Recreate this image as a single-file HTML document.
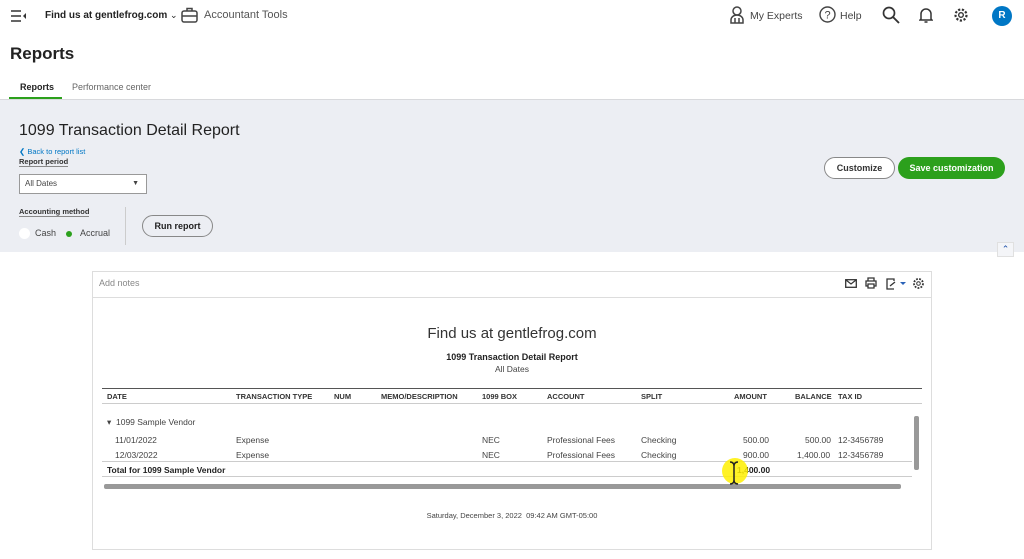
<!DOCTYPE html>
<html><head><meta charset="utf-8"><style>
*{box-sizing:border-box;margin:0;padding:0}
body{width:1024px;height:559px;overflow:hidden;background:#fff;font-family:"Liberation Sans",sans-serif;color:#393a3d;position:relative}
.a{position:absolute;white-space:nowrap}
.th{position:absolute;top:392px;font-size:7.5px;font-weight:bold;color:#333}
.td{position:absolute;font-size:8.5px;color:#444}
</style></head><body>
<svg class="a" style="left:11px;top:10px" width="16" height="12"><path d="M0 1h10M0 6h10M0 11h10" stroke="#333" stroke-width="1.6"/><path d="M15 3l-3 3 3 3z" fill="#333"/></svg>
<div class="a" style="left:45px;top:10px;font-size:10px;font-weight:bold;color:#222">Find us at gentlefrog.com <span style="font-weight:normal;font-size:9px">⌄</span></div>
<svg class="a" style="left:181px;top:7px" width="17" height="16"><rect x="1" y="4" width="15" height="11" rx="2" fill="none" stroke="#444" stroke-width="1.5"/><path d="M6 4V1.5h5V4M1 9h15" stroke="#444" stroke-width="1.5" fill="none"/></svg>
<div class="a" style="left:204px;top:9px;font-size:11px;color:#555">Accountant Tools</div>
<svg class="a" style="left:730px;top:6px" width="14" height="18"><circle cx="7" cy="5" r="4" fill="none" stroke="#444" stroke-width="1.5"/><path d="M1 17v-3a6 5 0 0 1 12 0v3zM5 12v5M9 12v5" fill="none" stroke="#444" stroke-width="1.5"/></svg>
<div class="a" style="left:750px;top:10px;font-size:10.5px;color:#444">My Experts</div>
<svg class="a" style="left:819px;top:6px" width="17" height="17"><circle cx="8.5" cy="8.5" r="7.5" fill="none" stroke="#444" stroke-width="1.4"/><text x="8.5" y="12.5" font-size="11" text-anchor="middle" fill="#444" font-family="Liberation Sans">?</text></svg>
<div class="a" style="left:840px;top:10px;font-size:10.5px;color:#444">Help</div>
<svg class="a" style="left:882px;top:6px" width="18" height="18"><circle cx="7" cy="7" r="5.5" fill="none" stroke="#333" stroke-width="1.7"/><path d="M11 11l6 6" stroke="#333" stroke-width="1.9"/></svg>
<svg class="a" style="left:919px;top:6px" width="14" height="18"><path d="M2 13V8a5 5 0 0 1 10 0v5l1 1H1zM5.5 16h3" fill="none" stroke="#333" stroke-width="1.5"/></svg>
<svg class="a" style="left:953px;top:7px" width="16" height="16"><circle cx="8" cy="8" r="5.5" fill="none" stroke="#333" stroke-width="2.2" stroke-dasharray="2.2 1.6"/><circle cx="8" cy="8" r="2.3" fill="none" stroke="#333" stroke-width="1.4"/></svg>
<div class="a" style="left:992px;top:6px;width:20px;height:20px;border-radius:50%;background:#0077c5;color:#fff;font-size:10px;font-weight:bold;text-align:center;line-height:20px">R</div>
<div class="a" style="left:10px;top:44px;font-size:17px;font-weight:bold;color:#222">Reports</div>
<div class="a" style="left:20px;top:82px;font-size:9px;font-weight:bold;color:#222">Reports</div>
<div class="a" style="left:9px;top:97px;width:53px;height:3px;background:#2ca01c"></div>
<div class="a" style="left:72px;top:82px;font-size:9px;color:#666">Performance center</div>
<div class="a" style="left:0;top:99px;width:1024px;height:153px;background:#eceef3;border-top:1px solid #d8d9dc"></div>
<div class="a" style="left:19px;top:122px;font-size:16px;color:#222">1099 Transaction Detail Report</div>
<div class="a" style="left:19px;top:147px;font-size:7.5px;color:#0077c5">❮ Back to report list</div>
<div class="a" style="left:19px;top:157px;font-size:7.5px;font-weight:bold;color:#333;border-bottom:1px solid #888">Report period</div>
<div class="a" style="left:19px;top:174px;width:128px;height:20px;background:#fff;border:1px solid #999;font-size:8px;line-height:18px;padding-left:5px;color:#444">All Dates<span style="position:absolute;right:7px;font-size:7px">▼</span></div>
<div class="a" style="left:19px;top:207px;font-size:7.5px;font-weight:bold;color:#333;border-bottom:1px solid #888">Accounting method</div>
<div class="a" style="left:19px;top:228px;width:11px;height:11px;border-radius:50%;background:#fff"></div>
<div class="a" style="left:35px;top:228px;font-size:9px;color:#444">Cash</div>
<div class="a" style="left:66px;top:231px;width:6px;height:6px;border-radius:50%;background:#2ca01c"></div>
<div class="a" style="left:80px;top:228px;font-size:9px;color:#444">Accrual</div>
<div class="a" style="left:125px;top:207px;width:1px;height:38px;background:#ccc"></div>
<div class="a" style="left:142px;top:215px;width:71px;height:22px;border:1px solid #888;border-radius:11px;font-size:9px;font-weight:bold;text-align:center;line-height:20px;color:#222">Run report</div>
<div class="a" style="left:824px;top:157px;width:71px;height:22px;border:1px solid #888;border-radius:11px;background:#fff;font-size:9px;font-weight:bold;text-align:center;line-height:20px;color:#333">Customize</div>
<div class="a" style="left:898px;top:157px;width:107px;height:22px;border-radius:11px;background:#2ca01c;font-size:9px;font-weight:bold;text-align:center;line-height:22px;color:#fff">Save customization</div>
<div class="a" style="left:997px;top:242px;width:17px;height:15px;background:#f4f5f8;border:1px solid #e0e0e0;font-size:9px;text-align:center;color:#1a4ea8;line-height:13px">⌃</div>
<div class="a" style="left:92px;top:271px;width:840px;height:279px;border:1px solid #ddd"></div>
<div class="a" style="left:92px;top:297px;width:840px;height:1px;background:#ddd"></div>
<div class="a" style="left:99px;top:278px;font-size:9px;color:#888">Add notes</div>
<svg class="a" style="left:845px;top:279px" width="12" height="9"><rect x="0.7" y="0.7" width="10.6" height="7.6" fill="none" stroke="#333" stroke-width="1.3"/><path d="M1 1l5 4 5-4" fill="none" stroke="#333" stroke-width="1.2"/></svg>
<svg class="a" style="left:865px;top:277px" width="12" height="12"><path d="M3 4V1h6v3M3 9H1V4h10v5H9M3 7h6v4H3z" fill="none" stroke="#333" stroke-width="1.3"/></svg>
<svg class="a" style="left:886px;top:278px" width="22" height="12"><path d="M8 3V1H1v10h7" fill="none" stroke="#333" stroke-width="1.3"/><path d="M4 8l5-4" stroke="#333" stroke-width="1.3"/><path d="M14 4h6l-3 3z" fill="#2a62b8"/></svg>
<svg class="a" style="left:912px;top:277px" width="13" height="13"><circle cx="6.5" cy="6.5" r="4.5" fill="none" stroke="#333" stroke-width="1.8" stroke-dasharray="1.8 1.3"/><circle cx="6.5" cy="6.5" r="1.8" fill="none" stroke="#333"/></svg>
<div class="a" style="left:0;width:1024px;text-align:center;top:325px;font-size:15px;color:#333">Find us at gentlefrog.com</div>
<div class="a" style="left:0;width:1024px;text-align:center;top:352px;font-size:9px;font-weight:bold;color:#222">1099 Transaction Detail Report</div>
<div class="a" style="left:0;width:1024px;text-align:center;top:364px;font-size:8.5px;color:#444">All Dates</div>
<div class="a" style="left:102px;top:388px;width:820px;height:16px;border-top:1px solid #555;border-bottom:1px solid #ccc"></div>
<div class="th" style="left:107px">DATE</div><div class="th" style="left:236px">TRANSACTION TYPE</div><div class="th" style="left:334px">NUM</div><div class="th" style="left:381px">MEMO/DESCRIPTION</div><div class="th" style="left:482px">1099 BOX</div><div class="th" style="left:547px">ACCOUNT</div><div class="th" style="left:641px">SPLIT</div><div class="th" style="left:734px">AMOUNT</div><div class="th" style="left:795px">BALANCE</div><div class="th" style="left:838px">TAX ID</div>
<div class="td" style="left:107px;top:417px">▾ &nbsp;1099 Sample Vendor</div>
<div class="td" style="left:115px;top:435px">11/01/2022</div><div class="td" style="left:236px;top:435px">Expense</div><div class="td" style="left:482px;top:435px">NEC</div><div class="td" style="left:547px;top:435px">Professional Fees</div><div class="td" style="left:641px;top:435px">Checking</div><div class="td" style="left:743px;top:435px">500.00</div><div class="td" style="left:805px;top:435px">500.00</div><div class="td" style="left:838px;top:435px">12-3456789</div>
<div class="td" style="left:115px;top:450px">12/03/2022</div><div class="td" style="left:236px;top:450px">Expense</div><div class="td" style="left:482px;top:450px">NEC</div><div class="td" style="left:547px;top:450px">Professional Fees</div><div class="td" style="left:641px;top:450px">Checking</div><div class="td" style="left:743px;top:450px">900.00</div><div class="td" style="left:797px;top:450px">1,400.00</div><div class="td" style="left:838px;top:450px">12-3456789</div>
<div class="a" style="left:102px;top:461px;width:810px;height:16px;border-top:1px solid #ccc;border-bottom:1px solid #ccc"></div>
<div class="td" style="left:107px;top:465px;font-weight:bold;color:#222">Total for 1099 Sample Vendor</div>
<div class="td" style="left:737px;top:465px;font-weight:bold;color:#222">1,400.00</div>
<div class="a" style="left:914px;top:416px;width:5px;height:54px;background:#999;border-radius:2px"></div>
<div class="a" style="left:104px;top:484px;width:797px;height:5px;background:#999;border-radius:2px"></div>
<div class="a" style="left:722px;top:458px;width:26px;height:26px;border-radius:50%;background:rgba(255,240,0,.85)"></div>
<svg class="a" style="left:729px;top:461px" width="10" height="24"><path d="M1 1q4 0 4 4v14q0 4-4 4M9 1q-4 0-4 4M9 23q-4 0-4-4" fill="none" stroke="#222" stroke-width="1.5"/></svg>
<div class="a" style="left:0;width:1024px;text-align:center;top:511px;font-size:7.5px;color:#444">Saturday, December 3, 2022 &nbsp;09:42 AM GMT-05:00</div>
</body></html>
